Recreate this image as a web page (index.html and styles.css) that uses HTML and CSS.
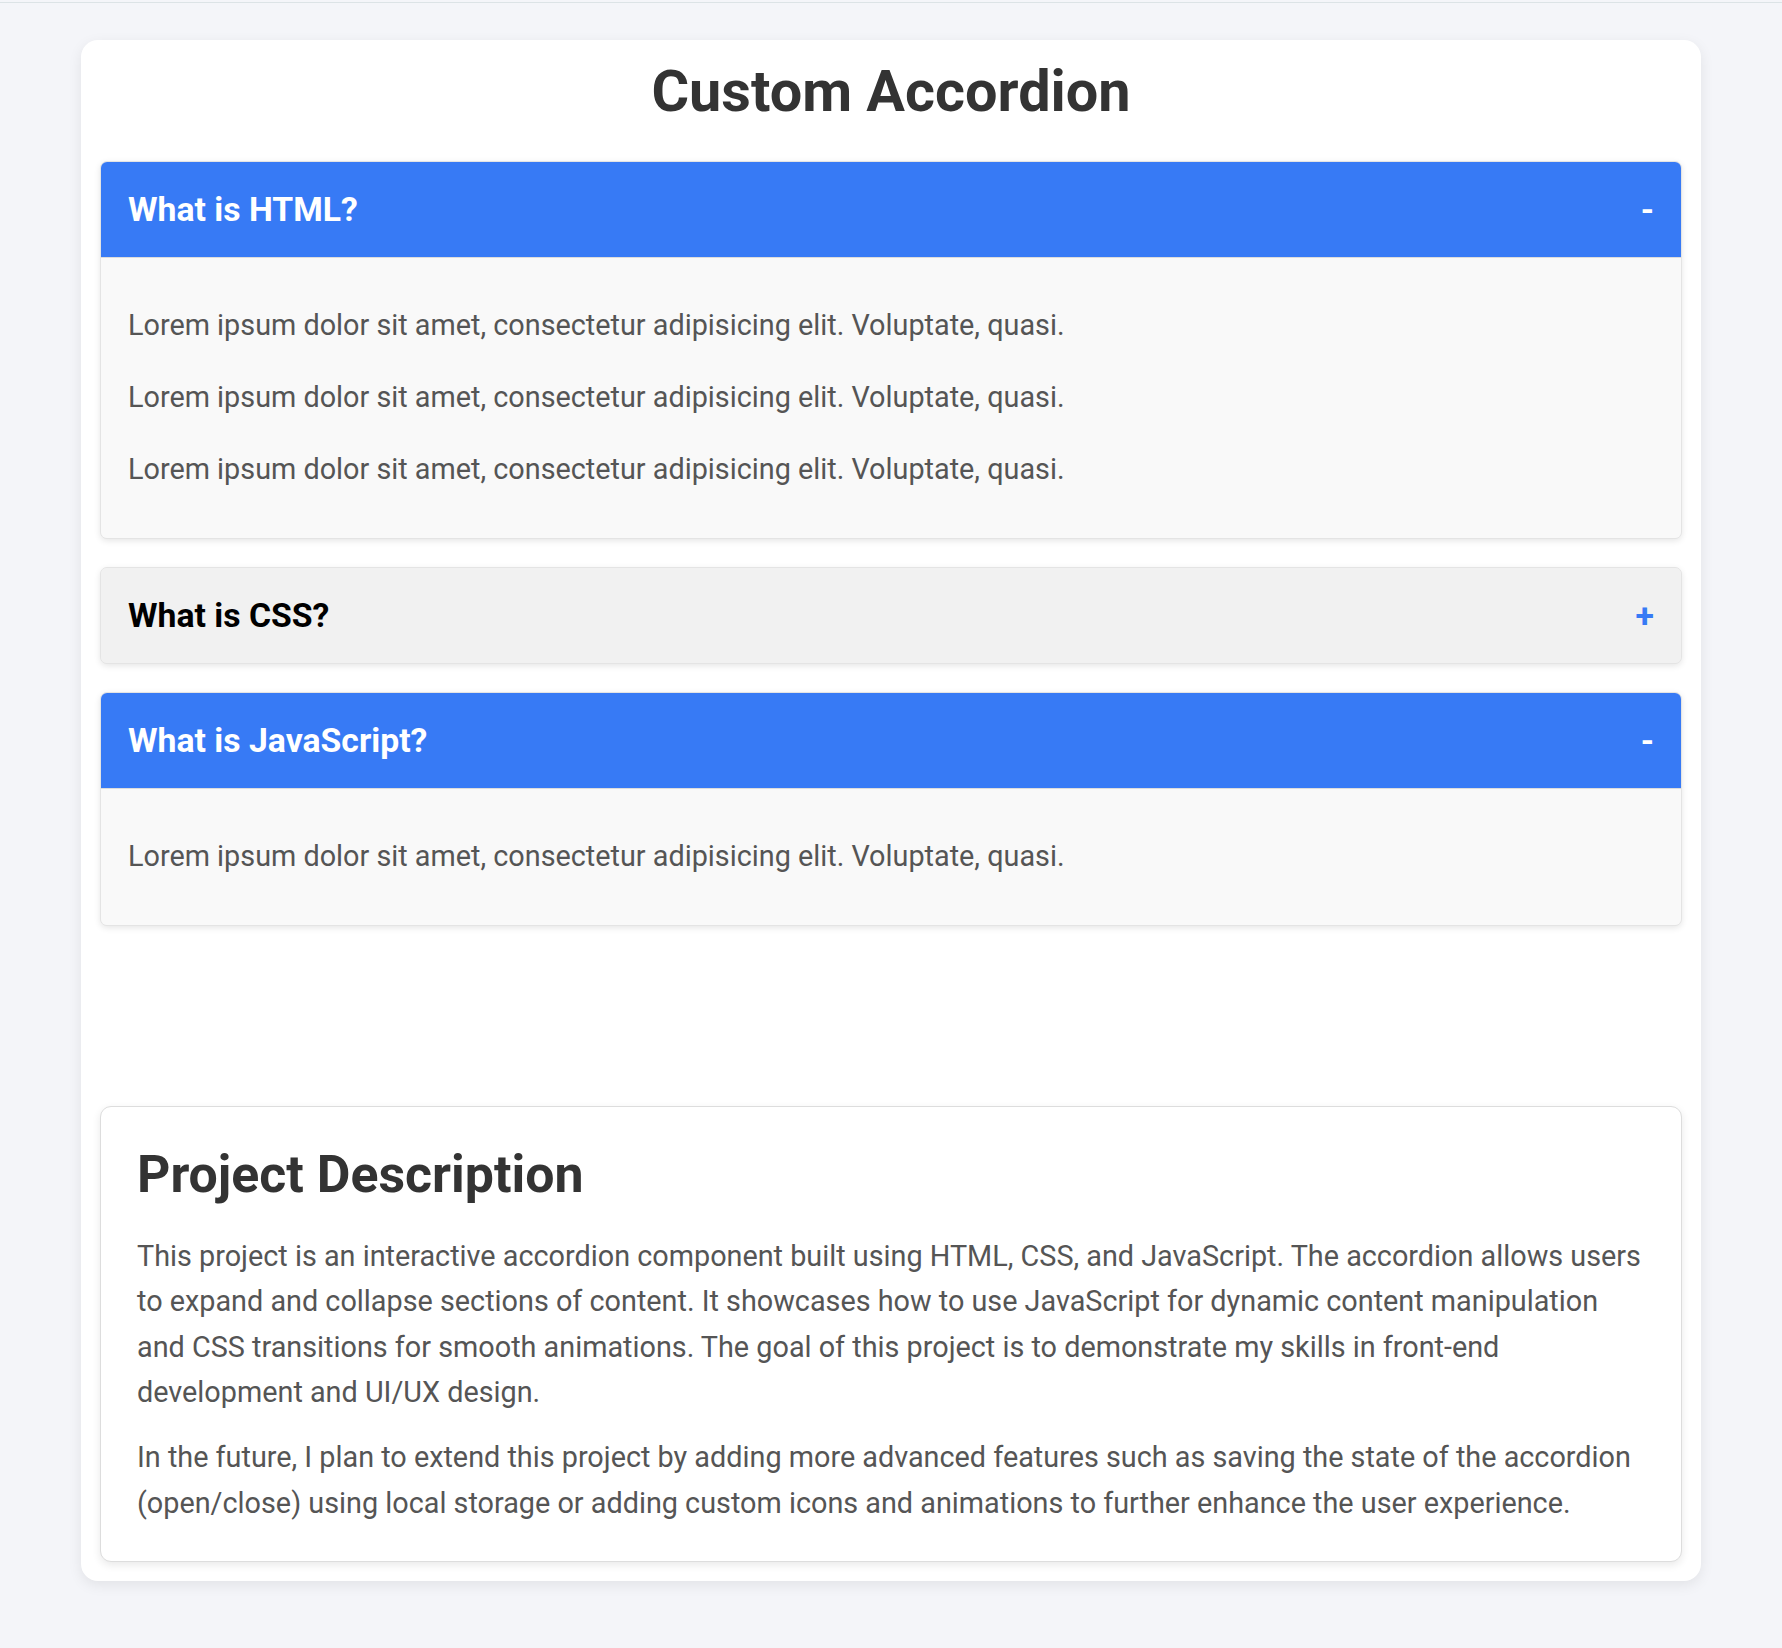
FILE: index.html
```html
<!DOCTYPE html>
<html lang="en">
<head>
<meta charset="utf-8">
<title>Custom Accordion</title>
<link rel="stylesheet" href="styles.css">
</head>
<body>
<div class="topline"></div>
<main class="container">
  <h1 class="title">Custom Accordion</h1>
  <div class="accordion">
    <section class="item open">
      <div class="item-header"><span class="item-title">What is HTML?</span><span class="toggle">-</span></div>
      <div class="item-body">
        <p>Lorem ipsum dolor sit amet, consectetur adipisicing elit. Voluptate, quasi.</p>
        <p>Lorem ipsum dolor sit amet, consectetur adipisicing elit. Voluptate, quasi.</p>
        <p>Lorem ipsum dolor sit amet, consectetur adipisicing elit. Voluptate, quasi.</p>
      </div>
    </section>
    <section class="item">
      <div class="item-header"><span class="item-title">What is CSS?</span><span class="toggle">+</span></div>
    </section>
    <section class="item open">
      <div class="item-header"><span class="item-title">What is JavaScript?</span><span class="toggle">-</span></div>
      <div class="item-body">
        <p>Lorem ipsum dolor sit amet, consectetur adipisicing elit. Voluptate, quasi.</p>
      </div>
    </section>
  </div>
  <section class="description">
    <h2>Project Description</h2>
    <p>This project is an interactive accordion component built using HTML, CSS, and JavaScript. The accordion allows users to expand and collapse sections of content. It showcases how to use JavaScript for dynamic content manipulation and CSS transitions for smooth animations. The goal of this project is to demonstrate my skills in front-end development and UI/UX design.</p>
    <p>In the future, I plan to extend this project by adding more advanced features such as saving the state of the accordion (open/close) using local storage or adding custom icons and animations to further enhance the user experience.</p>
  </section>
</main>
</body>
</html>
```

FILE: styles.css
```css
* { box-sizing: border-box; }

html, body {
  margin: 0;
  padding: 0;
}

body {
  background: #f4f5f9;
  font-family: Roboto, "Liberation Sans", Arial, sans-serif;
  color: #333;
}

.topline {
  margin-top: 2px;
  height: 1px;
  background: #dce3e6;
}

.container {
  width: 1620px;
  margin: 37px auto 60px;
  background: #ffffff;
  border-radius: 17px;
  box-shadow: 0 4px 14px rgba(0, 0, 0, 0.08);
  padding: 17.6px 19px 19px;
}

.title {
  margin: 0 0 36px;
  text-align: center;
  font-size: 57.6px;
  font-weight: 700;
  line-height: 67.5px;
  color: #333;
}

.accordion {
  display: flex;
  flex-direction: column;
  gap: 28px;
}

.item {
  border: 1px solid #e4e4e4;
  border-radius: 7px;
  overflow: hidden;
  box-shadow: 0 2px 6px rgba(0, 0, 0, 0.1);
  background: #f1f1f1;
}

.item-header {
  display: flex;
  justify-content: space-between;
  align-items: center;
  padding: 28px 27px;
  background: #f1f1f1;
  color: #000;
  font-size: 33.75px;
  font-weight: 700;
  line-height: 39px;
}

.toggle {
  color: #377af5;
  font-weight: 700;
}

.item.open .item-header {
  background: #377af5;
  color: #fff;
  border-bottom: 1px solid #dcdcdc;
}

.item.open .toggle {
  color: #fff;
}

.item-body {
  background: #f9f9f9;
  padding: 17.5px 27px;
}

.item-body p {
  margin: 28.8px 0;
  font-size: 28.8px;
  line-height: 43.2px;
  color: #555;
}

.description {
  margin-top: 180px;
  background: #fff;
  border: 1px solid #dddddd;
  border-radius: 11px;
  box-shadow: 0 3px 9px rgba(0, 0, 0, 0.09);
  padding: 38px 35px 35px 36px;
}

.description h2 {
  margin: 0 0 28.5px;
  font-size: 51.84px;
  font-weight: 700;
  line-height: 60.75px;
  color: #333;
}

.description p {
  margin: 0 0 19.5px;
  font-size: 28.8px;
  line-height: 45.5px;
  color: #555;
}

.description p:last-child {
  margin-bottom: 0;
}
```
